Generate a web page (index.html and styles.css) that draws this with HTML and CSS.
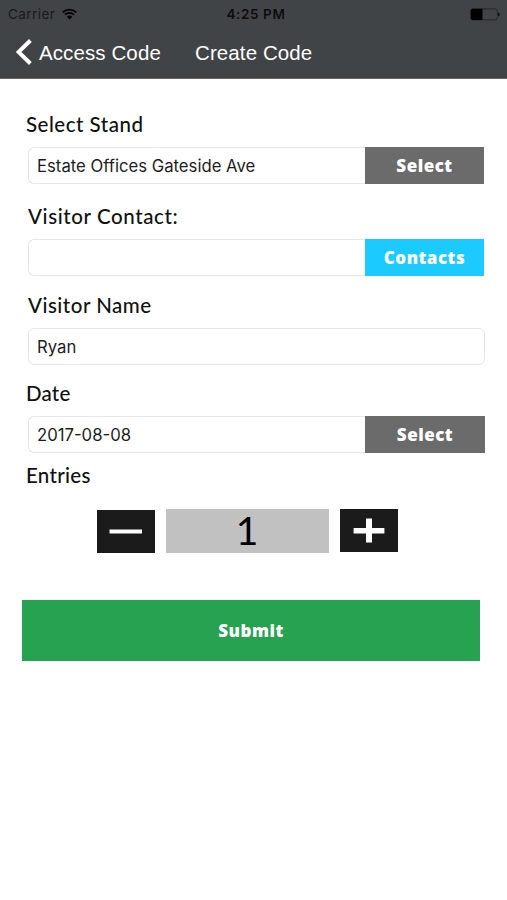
FILE: index.html
```html
<!DOCTYPE html>
<html lang="en">
<head>
<meta charset="utf-8">
<title>Create Code</title>
<link rel="stylesheet" href="styles.css">
</head>
<body>
<header class="header">
  <div class="status">
    <div class="carrier"><span>Carrier</span>
      <svg class="wifi" width="15" height="12" viewBox="0 0 15 12"><path d="M0.8 4.3A9.6 9.6 0 0 1 14.2 4.3M3 6.7A6.4 6.4 0 0 1 12 6.7" fill="none" stroke="#000" stroke-width="1.8"/><path d="M7.5 11.6L4.8 8.7A4 4 0 0 1 10.2 8.7Z"/></svg>
    </div>
    <span class="time">4:25 PM</span>
    <svg class="battery" width="30" height="13" viewBox="0 0 30 13"><rect x="0.9" y="0.9" width="26.4" height="11" rx="2" fill="none" stroke="#202223" stroke-width="0.8"/><path d="M2.6 0.7H12.5V12H2.6Q0.7 12 0.7 10V2.6Q0.7 0.7 2.6 0.7ZM28.2 4.3Q29.6 5 29.6 6.4T28.2 8.5Z"/></svg>
  </div>
  <nav class="nav">
    <svg class="chevron" width="16" height="26" viewBox="0 0 16 26"><path d="M14.4 1.5L2.5 13L14.4 24.5" fill="none" stroke="#fff" stroke-width="4"/></svg>
    <span class="back">Access Code</span>
    <span class="title">Create Code</span>
  </nav>
</header>
<main class="form">
  <div class="label stand">Select Stand</div>
  <div class="row"><div class="field"><span class="v1">Estate Offices Gateside Ave</span></div><div class="btn">Select</div></div>
  <div class="label contact">Visitor Contact:</div>
  <div class="row"><div class="field"></div><div class="btn blue">Contacts</div></div>
  <div class="label name">Visitor Name</div>
  <div class="row wide"><div class="field full"><span class="v2">Ryan</span></div></div>
  <div class="label date">Date</div>
  <div class="row wide"><div class="field"><span class="v3">2017-08-08</span></div><div class="btn">Select</div></div>
  <div class="label entries">Entries</div>
  <div class="counter">
    <div class="step minus"><svg width="58" height="43" viewBox="0 0 58 43"><path d="M12.5 19.5H45V23.5H12.5Z" fill="#fff"/></svg></div>
    <div class="count">1</div>
    <div class="step"><svg width="58" height="43" viewBox="0 0 58 43"><path d="M13.6 19H26V9.5H32V19H44.4V24.5H32V33.5H26V24.5H13.6Z" fill="#fff"/></svg></div>
  </div>
  <div class="submit">Submit</div>
</main>
</body>
</html>
```
FILE: styles.css
```css
* { box-sizing: border-box; }
body { margin: 0; background: #fff; color: #111; font-family: Lato, sans-serif; white-space: nowrap; }
.header { height: 79px; background: #414446; border-bottom: 1px solid #626466; }
.status { display: grid; grid-template-columns: 1fr auto 1fr; align-items: center; height: 27px; padding: 0 7px 0 8px; color: #000; font: 13.5px/27px Inter, sans-serif; }
.carrier { display: flex; align-items: center; gap: 7px; color: #17191a; letter-spacing: 0.45px; }
.time { font-weight: 600; letter-spacing: 0.6px; padding: 1px 0 0 4px; color: #0c0d0d; }
.battery { justify-self: end; }
.nav { display: flex; align-items: center; height: 50px; padding-left: 16px; color: #fff; font: 20.5px/50px "Liberation Sans", sans-serif; letter-spacing: 0.1px; }
.nav span { padding-top: 1px; }
.back { width: 156px; margin-left: 7px; }
.form { padding: 33px 22px 0 28px; }
.label { height: 24px; margin-bottom: 11px; font-size: 20.5px; line-height: 25px; font-weight: 500; letter-spacing: 0.5px; }
.stand, .date, .entries { margin-left: -2px; }
.contact { margin-top: 20px; letter-spacing: 0.6px; }
.name { margin-top: 17px; }
.date { margin-top: 16px; letter-spacing: 0.2px; }
.entries { margin-top: 10px; letter-spacing: 0.3px; }
.row { display: flex; width: 456px; height: 37px; }
.wide { width: 457px; }
.field { width: 337px; border: 1px solid #e6e6e6; border-right: 0; border-radius: 6px 0 0 6px; padding: 0 0 0 8px; font: 16.7px/36px Inter, sans-serif; color: #1c1c1c; }
.full { width: 457px; border-right: 1px solid #e6e6e6; border-radius: 6px; }
.btn { flex: 1; background: #6b6b6b; color: #fff; text-align: center; font: 900 17px/37px "Noto Sans", sans-serif; letter-spacing: 0.5px; }
.blue { background: #1bcaff; }
.counter { display: flex; gap: 11px; height: 44px; margin: 22px 0 0 68.5px; }
.step { width: 58px; height: 43px; background: #1b1b1b; }
.step svg { display: block; }
.minus { margin-top: 1px; }
.count { width: 163px; height: 44px; background: #c1c1c1; color: #000; text-align: center; font-size: 39px; line-height: 43px; }
.submit { width: 458px; height: 61px; margin: 46.5px 0 0 -6px; background: #26a251; color: #fff; text-align: center; font: 900 17px/61px "Noto Sans", sans-serif; letter-spacing: 0.5px; }
```
